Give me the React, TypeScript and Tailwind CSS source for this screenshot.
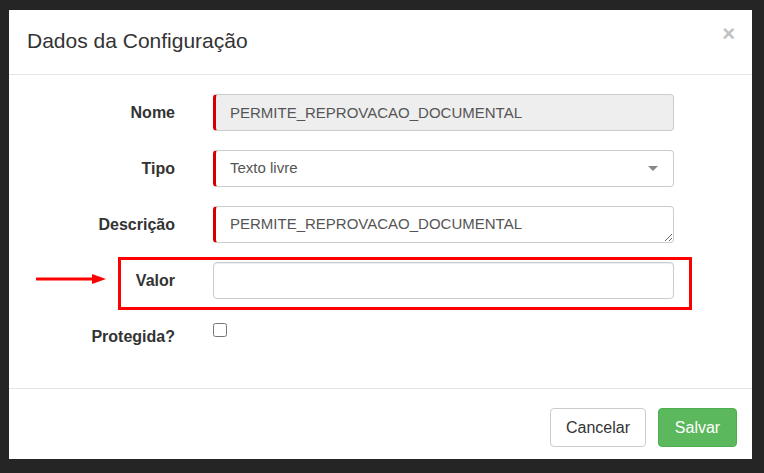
import React from "react";

const font = { fontFamily: '"Liberation Sans", Arial, sans-serif' };

function Label({ children, top = false }: { children: React.ReactNode; top?: boolean }) {
  return (
    <div
      className={
        "w-[166px] shrink-0 text-right text-[16px] font-bold text-[#333] " +
        (top ? "pt-[8px] leading-[22px]" : "self-center leading-[22px]")
      }
    >
      {children}
    </div>
  );
}

export default function App() {
  return (
    <div className="min-h-[473px] w-full bg-[#252525] pl-[9px] pt-[10px]" style={font}>
      <div className="relative flex h-[449px] w-[743px] flex-col bg-white">
        {/* header */}
        <div className="flex h-[65px] shrink-0 items-center justify-between border-b border-[#e5e5e5] pl-[18px] pr-[17px]">
          <h4 className="pb-[4px] text-[21px] leading-none text-[#333]">Dados da Configuração</h4>
          <button className="mb-[16px] text-[22px] font-bold leading-none text-[#c2c2c2]">×</button>
        </div>

        {/* body */}
        <div className="flex flex-1 flex-col gap-[19px] pt-[19px]">
          <div className="flex gap-[38px]">
            <Label>Nome</Label>
            <input
              readOnly
              disabled
              value="PERMITE_REPROVACAO_DOCUMENTAL"
              className="h-[37px] w-[461px] rounded-[4px] border border-l-[3px] border-[#ccc] border-l-[#d40000] bg-[#eee] pl-[14px] text-[15px] text-[#555] outline-none"
            />
          </div>

          <div className="flex gap-[38px]">
            <Label>Tipo</Label>
            <div className="flex h-[37px] w-[461px] items-center justify-between rounded-[4px] border border-l-[3px] border-[#ccc] border-l-[#d40000] bg-white pl-[14px] pr-[15px] text-[15px] text-[#555]">
              <span>Texto livre</span>
              <svg width="10" height="6" viewBox="0 0 10 6">
                <path d="M0 0 L10 0 L5 5 Z" fill="#888" />
              </svg>
            </div>
          </div>

          <div className="flex gap-[38px]">
            <Label>Descrição</Label>
            <textarea
              readOnly
              rows={1}
              value="PERMITE_REPROVACAO_DOCUMENTAL"
              className="h-[37px] w-[461px] rounded-[4px] border border-l-[3px] border-[#ccc] border-l-[#d40000] bg-white pl-[14px] pt-[6px] text-[15px] leading-[21px] text-[#555] outline-none"
            />
          </div>

          <div className="flex gap-[38px]">
            <Label>Valor</Label>
            <input
              readOnly
              value=""
              className="h-[37px] w-[461px] rounded-[4px] border border-[#ccc] bg-white pl-[14px] text-[15px] text-[#555] outline-none shadow-[inset_0_1px_1px_rgba(0,0,0,0.075)]"
            />
          </div>

          <div className="flex gap-[38px]">
            <Label top>Protegida?</Label>
            <input type="checkbox" className="mt-[5px] h-[14px] w-[14px] self-start" />
          </div>
        </div>

        {/* footer */}
        <div className="flex h-[71px] shrink-0 items-start justify-end gap-[12px] border-t border-[#e5e5e5] pr-[15px] pt-[19px]">
          <button className="h-[39px] w-[96px] rounded-[4px] border border-[#ccc] bg-white text-[16px] text-[#333]">
            Cancelar
          </button>
          <button className="h-[39px] w-[79px] rounded-[4px] border border-[#4cae4c] bg-[#5cb85c] text-[16px] text-white">
            Salvar
          </button>
        </div>

        {/* annotation: highlight box and arrow */}
        <div className="pointer-events-none absolute left-[109px] top-[247px] h-[53px] w-[574px] border-[3px] border-[#f00]" />
        <svg className="pointer-events-none absolute left-[27px] top-[263px]" width="72" height="12" viewBox="0 0 72 12">
          <line x1="1" y1="6" x2="58" y2="6" stroke="#f00" strokeWidth="3" strokeLinecap="round" />
          <path d="M56 1 L70 6 L56 11 Z" fill="#f00" />
        </svg>
      </div>
    </div>
  );
}
